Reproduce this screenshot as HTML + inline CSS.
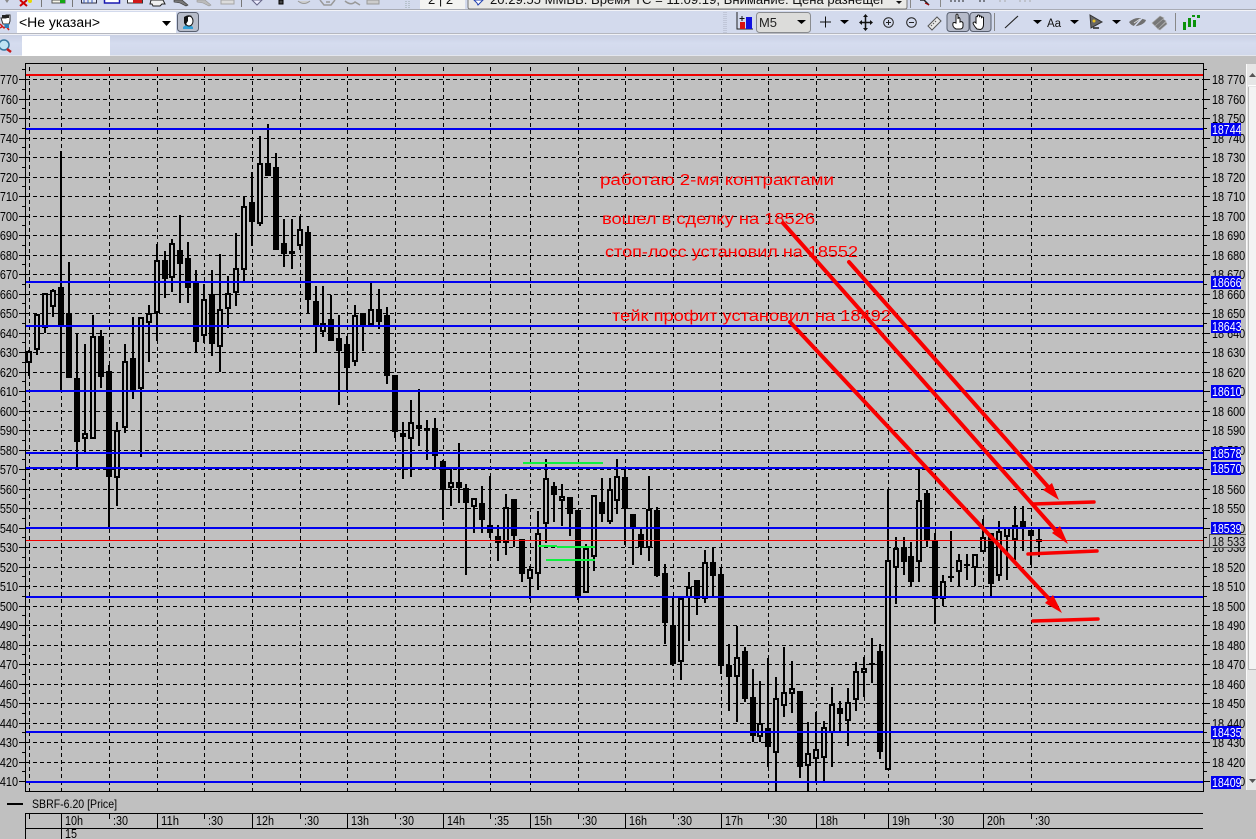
<!DOCTYPE html>
<html lang="ru"><head><meta charset="utf-8"><title>SBRF-6.20</title>
<style>html,body{margin:0;padding:0;background:#c0c0c0;width:1256px;height:839px;overflow:hidden}svg{display:block}text{font-family:"Liberation Sans","DejaVu Sans",sans-serif}</style></head>
<body>
<svg xmlns="http://www.w3.org/2000/svg" width="1256" height="839" viewBox="0 0 1256 839">
<defs>
<linearGradient id="r3" x1="0" y1="0" x2="0" y2="1"><stop offset="0" stop-color="#c9d0e4"/><stop offset=".4" stop-color="#d5dcef"/><stop offset="1" stop-color="#d0d7ea"/></linearGradient>
<path id="maj" d="M0 79.5h6M0 99.5h6M0 118.5h6M0 138.5h6M0 157.5h6M0 177.5h6M0 196.5h6M0 216.5h6M0 235.5h6M0 255.5h6M0 274.5h6M0 294.5h6M0 313.5h6M0 333.5h6M0 352.5h6M0 372.5h6M0 391.5h6M0 411.5h6M0 430.5h6M0 450.5h6M0 469.5h6M0 489.5h6M0 508.5h6M0 528.5h6M0 547.5h6M0 567.5h6M0 586.5h6M0 606.5h6M0 625.5h6M0 645.5h6M0 664.5h6M0 684.5h6M0 703.5h6M0 723.5h6M0 742.5h6M0 762.5h6M0 781.5h6" stroke="#000" fill="none"/>
<path id="min" d="M0 69.5h3M0 89.5h3M0 108.5h3M0 128.5h3M0 147.5h3M0 167.5h3M0 186.5h3M0 206.5h3M0 225.5h3M0 245.5h3M0 264.5h3M0 284.5h3M0 303.5h3M0 323.5h3M0 342.5h3M0 362.5h3M0 381.5h3M0 401.5h3M0 420.5h3M0 440.5h3M0 459.5h3M0 479.5h3M0 498.5h3M0 518.5h3M0 537.5h3M0 557.5h3M0 576.5h3M0 596.5h3M0 615.5h3M0 635.5h3M0 654.5h3M0 674.5h3M0 693.5h3M0 713.5h3M0 732.5h3M0 752.5h3M0 771.5h3" stroke="#000" fill="none"/>
</defs>

<!-- toolbars -->
<rect width="1256" height="56" fill="#d3daed"/>
<rect y="9" width="1256" height="1" fill="#a9acb5"/><rect y="10" width="1256" height="1" fill="#f2f3f8"/>
<rect y="33" width="1256" height="1" fill="#b5b7bf"/><rect y="34" width="1256" height="1" fill="#f0f1f6"/>
<rect y="35" width="1256" height="21" fill="url(#r3)"/>
<rect y="55" width="1256" height="1" fill="#e4e6ee"/>

<!-- row 1 cut icons -->
<g>
<path d="M5 0h4l-2 3z" fill="#888"/>
<path d="M20 0l7 6M27 0l-7 6" stroke="#d00000" stroke-width="2"/><circle cx="30" cy="1" r="2" fill="#e8d800"/>
<rect x="41" y="0" width="1" height="7" fill="#777"/>
<rect x="52" y="0" width="13" height="3" fill="#f4f4e8" stroke="#555"/><path d="M60 0h5v3h-5z" fill="#14a814"/>
<rect x="72" y="0" width="1" height="7" fill="#777"/>
<rect x="81.500" y="-2" width="15" height="5" fill="#e8ecf8" stroke="#334"/><path d="M84 0v3M88 0v3M92 0v3" stroke="#3458b8"/>
<rect x="104.500" y="-2" width="15" height="5" fill="#fff" stroke="#1818b0" stroke-width="1.500"/>
<rect x="127.500" y="-2" width="15" height="5" fill="#fff" stroke="#333"/><rect x="133" y="0" width="9" height="3" fill="#d01818"/>
<path d="M151 0h12l2 4h-3l-2 2h-7l-1-2h-2z" fill="#f0f0f0" stroke="#222"/>
<path d="M174 0h8l6 5-2 1-6-3-6-1z" fill="#777" stroke="#333" stroke-width=".6"/>
<path d="M197 0h8l6 5-2 1-6-3-6-1z" fill="#bbb" stroke="#999" stroke-width=".6"/>
<path d="M221 0h13v4h-13z" fill="#dcdcdc" stroke="#a4a4a4"/>
<rect x="241" y="0" width="1" height="7" fill="#777"/>
<path d="M252 0h10l-5 5z" fill="#eef" stroke="#668"/>
<rect x="279" y="0" width="4" height="4" fill="#444" stroke="#000"/>
<path d="M298 1q6 5 12 0" fill="#cfcfcf" stroke="#999"/>
<path d="M320 0l4 5h7l4-5M326 2h4" fill="none" stroke="#999" stroke-width="1.500"/>
<path d="M345 1q6 5 10 1l5 3" fill="none" stroke="#999" stroke-width="1.500"/>
<path d="M367 0h12v4h-12z" fill="#ccc" stroke="#999"/>
<path d="M406 1v8M409 1v8" stroke="#9aa" stroke-dasharray="1 1"/>
<rect x="420" y="0" width="45" height="9" fill="#f3f3f1"/>
<text x="428" y="4" font-size="13" fill="#111">2 | 2</text>
<path d="M468 -2v9q0 2 2 2h435q2 0 2-2v-9" fill="#e9e9e6" stroke="#777"/>
<path d="M474 0h9l-3 3-2 2-1-2z" fill="#fff" stroke="#2040b0"/>
<text x="490" y="4" font-size="13" fill="#111" textLength="395" lengthAdjust="spacingAndGlyphs">20:29:55  ММВБ: Время ТС = 11:09:19, Внимание: Цена разнещег</text>
<path d="M896 1h6l-3 3z" fill="#111"/>
<rect x="910" y="0" width="1" height="8" fill="#888"/>
<path d="M920 0h4l2 2 3 3" fill="none" stroke="#222" stroke-width="1.500"/><path d="M925 3l4 2" stroke="#a00"/>
<rect x="940" y="0" width="1" height="7" fill="#888"/>
<path d="M951 0v2M955 0v2M959 0v2M963 0v2M980 0v2M984 0v2" stroke="#222"/><path d="M1000 0v2M1005 0v2M1020 0v2M1025 0v2M1030 0v2" stroke="#aaa"/>
</g>

<!-- row 2 left -->
<g>
<path d="M1 18h5v-3h4v6l-1 3h-6z" fill="#fff" stroke="#333"/><path d="M2 15h7v3H2z" fill="#222"/>
<path d="M0 24l4 4 2-2 3 4M0 28l3-2" stroke="#d01818" stroke-width="1.500" fill="none"/>
<path d="M4 24h5v4H5z" fill="#2d7fb8"/>
<rect x="17" y="12" width="159" height="21" fill="#fff"/>
<text x="19" y="27" font-size="13.500" fill="#000" textLength="81" lengthAdjust="spacingAndGlyphs">&lt;Не указан&gt;</text>
<path d="M162 21h9l-4.500 5z" fill="#000"/>
<rect x="177.500" y="12.500" width="21" height="19" rx="3" fill="#b8bdca" stroke="#596070"/>
<path d="M183 27q5-4 10 0v2h-10z" fill="#30a0d8"/>
<ellipse cx="189" cy="21" rx="4" ry="5" fill="#fff" stroke="#111"/><path d="M184 23v-6q4-3 8-1l-4 1v4l-2 3v2z" fill="#111"/>
<!-- row 3 -->
<rect x="22" y="36" width="88" height="20" fill="#fff"/>
<circle cx="4" cy="45" r="5" fill="#bfe4f4" stroke="#3878a0" stroke-width="1.500"/>
<path d="M7 49l4 3" stroke="#c81818" stroke-width="2.500"/>
</g>

<!-- row 2 right -->
<g>
<path d="M724 12v21M726 12v21" stroke="#aeb3c2" stroke-dasharray="1 1"/>
<path d="M737 12v17h16" fill="none" stroke="#222"/>
<rect x="740" y="22" width="5" height="7" fill="#d81010"/><rect x="746" y="17" width="6" height="12" fill="#1010e0"/>
<path d="M742 16v5M739.500 18.500h5" stroke="#111"/>
<rect x="756.500" y="12.500" width="54" height="20" rx="3" fill="#dcdcda" stroke="#8a8c90"/>
<text x="759" y="27" font-size="13" fill="#222" textLength="18" lengthAdjust="spacingAndGlyphs">M5</text>
<path d="M797 20h9l-4.500 4z" fill="#000"/>
<path d="M820 22h11M825.500 16.500v11" stroke="#111"/>
<path d="M840 20h9l-4.500 4zM1033 20h9l-4.500 4zM1070 20h9l-4.500 4zM1112 20h9l-4.500 4z" fill="#000"/>
<path d="M860 22.500h12M865.500 16v13" stroke="#111" stroke-width="1.500"/><path d="M865.500 14l-2.500 3h5zM865.500 31l-2.500-3h5zM859 22.500l3-2.500v5zM873 22.500l-3-2.500v5z" fill="#111"/>
<circle cx="888.500" cy="22.500" r="4.800" fill="none" stroke="#222"/><path d="M886 22.500h5M888.500 20v5" stroke="#222"/>
<circle cx="911.500" cy="22.500" r="4.800" fill="none" stroke="#222"/><path d="M909 22.500h5" stroke="#222"/>
<path d="M928 26l9-9 4 4-9 9z" fill="#e8e8e8" stroke="#555"/><path d="M931 25l1 1M933 23l1 1M935 21l1 1" stroke="#555"/>
<rect x="947" y="12.500" width="22" height="19" rx="3" fill="#b6bbca" stroke="#596070"/>
<rect x="970" y="12.500" width="21" height="19" rx="3" fill="#b6bbca" stroke="#596070"/>
<path d="M956 29q-4-2-3-6 1-1 3 0v-8q1-2 2 0v4q1-3 2 0v3q2-1 3 1v3q0 3-3 3z" fill="#fff" stroke="#111"/>
<path d="M977 29q-3-3-4-6 1-2 3 0v-6q1-1 1.500 0v-1.500q1-1 2 0v1q1-1 2 0v1q1-1 2 0v7q0 4-3 5z" fill="#fff" stroke="#111"/>
<rect x="994" y="13" width="1" height="18" fill="#888"/>
<path d="M1005 28l13-12" stroke="#222" stroke-width="1.100"/>
<text x="1047" y="27" font-size="11.500" fill="#111">Aa</text>
<path d="M1090 15l1 13 11-6z" fill="#666" stroke="#333"/><path d="M1093 28h6" stroke="#222" stroke-width="1.500"/><circle cx="1094" cy="21" r="1.500" fill="#e8c020"/>
<path d="M1129 22q7-6 14-3l3 1q-1 4-9 6-5 1-8-4z" fill="#707070"/><path d="M1132 29l12-13" stroke="#d3daed" stroke-width="1.500"/><path d="M1134 23l6-4" stroke="#ddd"/>
<path d="M1152 23l8-7 4 2-9 8zM1155 26l8-7 3 2-8 8zM1158 29l8-7 1 2-7 6z" fill="#777" stroke="#aaa" stroke-width=".6"/>
<rect x="1175" y="13" width="1" height="18" fill="#888"/>
<path d="M1183 22h3v8h-3zM1188 18h3v9h-3zM1193 20h3v7h-3zM1197 15h3v3h-3zM1192 15h3v2h-3z" fill="#0b930b"/>
</g>

<!-- chart -->
<rect y="56" width="1256" height="783" fill="#c0c0c0"/>
<g shape-rendering="crispEdges">
<path d="M26 79.500H1203M26 99.500H1203M26 118.500H1203M26 138.500H1203M26 157.500H1203M26 177.500H1203M26 196.500H1203M26 216.500H1203M26 235.500H1203M26 255.500H1203M26 274.500H1203M26 294.500H1203M26 313.500H1203M26 333.500H1203M26 352.500H1203M26 372.500H1203M26 391.500H1203M26 411.500H1203M26 430.500H1203M26 450.500H1203M26 469.500H1203M26 489.500H1203M26 508.500H1203M26 528.500H1203M26 547.500H1203M26 567.500H1203M26 586.500H1203M26 606.500H1203M26 625.500H1203M26 645.500H1203M26 664.500H1203M26 684.500H1203M26 703.500H1203M26 723.500H1203M26 742.500H1203M26 762.500H1203M26 781.500H1203" stroke="#000" stroke-dasharray="4 3" fill="none"/>
<path d="M29.500 67V791M61.500 67V791M109.500 67V791M157.500 67V791M204.500 67V791M252.500 67V791M300.500 67V791M347.500 67V791M395.500 67V791M443.500 67V791M490.500 67V791M530.500 67V791M578.500 67V791M625.500 67V791M673.500 67V791M721.500 67V791M768.500 67V791M816.500 67V791M864.500 67V791M888.500 67V791M935.500 67V791M983.500 67V791M1031.500 67V791" stroke="#000" stroke-dasharray="4 3" fill="none"/>

<!-- wicks -->
<path fill="none" stroke="#000" stroke-width="2" d="M29 350V376M37 314V355M45 293V333M53 289V317M61 151V390M69 262V378M77 333V467M85 344V452M93 315V439M101 330V388M109 365V527M117 422V506M125 344V433M133 317V399M141 317V457M149 305V362M157 244V341M165 251V298M172 239V292M180 215V303M188 242V303M196 270V352M204 284V343M212 270V356M220 254V372M228 276V328M236 233V306M244 197V282M252 172V246M260 136V226M268 124V176M276 153V250M284 219V267M292 219V269M300 216V250M308 226V313M316 286V352M323 286V337M331 295V341M339 315V405M347 336V390M355 305V366M363 313V351M371 283V325M379 289V329M387 307V384M395 375V438M403 422V479M411 400V477M419 389V446M427 420V460M435 418V467M443 460V520M451 469V506M459 443V503M466 484V575M474 498V533M482 486V533M490 476V538M498 525V561M506 494V555M514 499V547M522 539V582M530 566V599M538 511V590M546 459V543M554 482V522M562 484V526M570 497V536M578 510V600M586 544V593M594 495V571M602 478V522M610 478V524M617 459V514M625 470V545M633 514V565M641 528V555M649 476V561M657 507V577M665 564V644M673 598V666M681 598V680M689 572V641M697 580V615M705 550V603M713 547V597M721 568V674M729 644V711M737 626V722M745 647V702M753 669V742M760 681V742M768 658V767M776 677V792M784 647V717M792 661V713M800 691V778M808 722V792M816 712V782M824 721V782M832 687V767M840 701V731M848 688V746M856 662V711M864 657V697M872 638V683M880 644V759M888 489V770M896 537V604M904 537V575M911 542V586M919 469V582M927 490V547M935 533V624M943 575V606M951 531V582M959 554V586M967 554V580M975 554V586M983 519V552M991 533V596M999 521V581M1007 527V580M1015 506V560M1023 506V551M1031 530V565M1039 529V557"/>
<!-- bodies -->
<path fill="none" stroke="#000" stroke-width="6" d="M29 351V363M37 314V350M45 293V328M53 290V307M61 287V327M69 313V378M77 378V442M85 433V439M93 336V439M101 336V377M109 371V477M117 430V478M125 361V428M133 358V390M141 317V389M149 313V323M157 260V313M165 260V279M172 243V278M180 250V264M188 258V288M196 282V342M204 299V336M212 294V344M220 309V347M228 293V309M236 268V293M244 206V270M252 202V222M260 163V224M268 163V176M276 167V250M284 243V254M292 251V254M300 229V246M308 232V300M316 301V326M323 323V332M331 319V341M339 338V351M347 344V368M355 315V362M363 313V325M371 309V325M379 309V322M387 315V376M395 375V432M403 433V437M411 422V439M419 425V429M427 428V431M435 428V456M443 461V490M451 482V488M459 482V488M466 488V503M474 498V507M482 503V520M490 525V533M498 536V543M506 507V543M514 499V536M522 539V574M530 569V579M538 533V574M546 478V524M554 486V495M562 496V501M570 497V514M578 510V597M586 548V593M594 495V557M602 502V514M610 489V522M617 476V501M625 477V509M633 514V527M641 534V547M649 509V548M657 510V576M665 573V623M673 625V664M681 598V662M689 587V598M697 580V599M705 562V599M713 562V576M721 574V666M729 665V677M737 657V677M745 651V699M753 697V736M760 723V737M768 728V747M776 698V753M784 692V706M792 688V694M800 691V767M808 753V766M816 749V759M824 727V758M832 704V733M840 708V714M848 702V721M856 671V700M864 668V673M872 663V665M880 651V752M888 560V770M896 548V568M904 547V562M911 556V582M919 500V562M927 493V541M935 540V599M943 581V599M951 576V578M959 560V572M967 564V566M975 554V568M983 537V552M991 533V584M999 531V576M1007 527V537M1015 525V540M1023 521V529M1031 530V536M1039 539V542"/>
<!-- hollow interiors -->
<path fill="none" stroke="#c0c0c0" stroke-width="2" d="M29 353V361M37 316V348M45 295V326M53 292V305M85 435V437M93 338V437M117 432V476M125 363V426M141 319V387M149 315V321M157 262V311M172 245V276M204 301V334M220 311V345M228 295V307M236 270V291M244 208V268M260 165V222M300 231V244M323 325V330M355 317V360M371 311V323M411 424V437M451 484V486M474 500V505M506 509V541M530 571V577M538 535V572M546 480V522M562 498V499M586 550V591M594 497V555M610 491V520M617 478V499M649 511V546M681 600V660M689 589V596M705 564V597M737 659V675M760 725V735M776 700V751M784 694V704M792 690V692M808 755V764M816 751V757M824 729V756M832 706V731M848 704V719M856 673V698M864 670V671M888 562V768M896 550V566M919 502V560M943 583V597M959 562V570M975 556V566M983 539V550M999 533V574M1007 529V535M1015 527V538"/>

<!-- levels -->
<rect x="26" y="74" width="1177" height="2" fill="#f00000"/>
<g fill="#0000f0">
<rect x="26" y="128" width="1177" height="2"/><rect x="26" y="281" width="1177" height="2"/><rect x="26" y="325" width="1177" height="2"/><rect x="26" y="390" width="1177" height="2"/><rect x="26" y="452" width="1177" height="2"/><rect x="26" y="467" width="1177" height="2"/><rect x="26" y="527" width="1177" height="2"/><rect x="26" y="596" width="1177" height="2"/><rect x="26" y="731" width="1177" height="2"/><rect x="26" y="781" width="1177" height="2"/>
</g>
<rect x="26" y="540" width="1177" height="1" fill="#f00000"/>

<!-- frame -->
<rect x="25.500" y="63.500" width="1178" height="728" fill="none" stroke="#000"/>
<use href="#maj" x="19"/><use href="#min" x="22"/>
<use href="#maj" x="1204"/><use href="#min" x="1204"/>
</g>

<!-- green -->
<g fill="#10f040" shape-rendering="crispEdges">
<rect x="523" y="462" width="80" height="2"/><rect x="538" y="545" width="19" height="2"/><rect x="557" y="546" width="38" height="2"/><rect x="546" y="559" width="49" height="2"/>
</g>

<!-- left labels -->
<g transform="translate(18 0) scale(.87 1)" text-anchor="end" font-size="12.500" fill="#000">
<text y="84">18 770</text><text y="104">18 760</text><text y="123">18 750</text><text y="143">18 740</text><text y="162">18 730</text><text y="182">18 720</text><text y="201">18 710</text><text y="221">18 700</text><text y="240">18 690</text><text y="260">18 680</text><text y="279">18 670</text><text y="299">18 660</text><text y="318">18 650</text><text y="338">18 640</text><text y="357">18 630</text><text y="377">18 620</text><text y="396">18 610</text><text y="416">18 600</text><text y="435">18 590</text><text y="455">18 580</text><text y="474">18 570</text><text y="494">18 560</text><text y="513">18 550</text><text y="533">18 540</text><text y="552">18 530</text><text y="572">18 520</text><text y="591">18 510</text><text y="611">18 500</text><text y="630">18 490</text><text y="650">18 480</text><text y="669">18 470</text><text y="689">18 460</text><text y="708">18 450</text><text y="728">18 440</text><text y="747">18 430</text><text y="767">18 420</text><text y="786">18 410</text>
</g>
<!-- right labels -->
<g transform="translate(1212 0) scale(.87 1)" font-size="12.500" fill="#000">
<text y="84">18 770</text><text y="104">18 760</text><text y="123">18 750</text><text y="143">18 740</text><text y="162">18 730</text><text y="182">18 720</text><text y="201">18 710</text><text y="221">18 700</text><text y="240">18 690</text><text y="260">18 680</text><text y="279">18 670</text><text y="299">18 660</text><text y="318">18 650</text><text y="338">18 640</text><text y="357">18 630</text><text y="377">18 620</text><text y="396">18 610</text><text y="416">18 600</text><text y="435">18 590</text><text y="455">18 580</text><text y="474">18 570</text><text y="494">18 560</text><text y="513">18 550</text><text y="533">18 540</text><text y="552">18 530</text><text y="572">18 520</text><text y="591">18 510</text><text y="611">18 500</text><text y="630">18 490</text><text y="650">18 480</text><text y="669">18 470</text><text y="689">18 460</text><text y="708">18 450</text><text y="728">18 440</text><text y="747">18 430</text><text y="767">18 420</text><text y="786">18 410</text>
</g>
<!-- blue value tags -->
<g fill="#0000f0" shape-rendering="crispEdges">
<rect x="1211" y="123" width="30" height="13"/><rect x="1211" y="276" width="30" height="13"/><rect x="1211" y="320" width="30" height="13"/><rect x="1211" y="385" width="30" height="13"/><rect x="1211" y="447" width="30" height="13"/><rect x="1211" y="462" width="30" height="13"/><rect x="1211" y="522" width="30" height="13"/><rect x="1211" y="726" width="30" height="13"/><rect x="1211" y="776" width="30" height="13"/>
</g>
<g transform="translate(1212 0) scale(.85 1)" font-size="12.500" fill="#fff">
<text y="134">18744</text><text y="287">18666</text><text y="331">18643</text><text y="396">18610</text><text y="458">18578</text><text y="473">18570</text><text y="533">18539</text><text y="737">18435</text><text y="787">18409</text>
</g>
<rect x="1209.500" y="534.500" width="37" height="13" fill="#c0c0c0" stroke="#555" shape-rendering="crispEdges"/>
<g transform="translate(1212 0) scale(.87 1)" font-size="12.500" fill="#111"><text y="546">18 533</text></g>

<!-- annotation text -->
<g font-size="16" fill="#ff0000">
<text x="600" y="185" textLength="234" lengthAdjust="spacingAndGlyphs">работаю 2-мя контрактами</text>
<text x="602" y="224" textLength="213" lengthAdjust="spacingAndGlyphs">вошел в сделку на 18526</text>
<text x="605" y="257" textLength="253" lengthAdjust="spacingAndGlyphs">стоп-лосс установил на 18552</text>
<text x="612" y="321" textLength="279" lengthAdjust="spacingAndGlyphs">тейк профит установил на 18492</text>
</g>

<!-- arrows -->
<g stroke="#f80000" stroke-width="4" fill="none" stroke-linecap="round">
<path d="M849 262L1050 489"/><path d="M783 223L1058 533"/><path d="M790 322L1052 602"/>
<path d="M1033 504L1094 502M1028 554L1097 551M1033 621L1098 619" stroke-width="3.500"/>
</g>
<g fill="#f80000">
<path d="M1059 500L1052 483L1043 490z"/><path d="M1068 544L1060 526L1052 533z"/><path d="M1062 613L1053 595L1045 603z"/>
</g>

<!-- bottom area -->
<g shape-rendering="crispEdges">
<rect x="7" y="803" width="16" height="2" fill="#000"/>
<path d="M25.500 813.500H1203M25.500 828.500H1203M25.500 813V839M61.500 813V839M157.500 813V828M252.500 813V828M347.500 813V828M443.500 813V828M530.500 813V828M625.500 813V828M721.500 813V828M816.500 813V828M888.500 813V828M983.500 813V828M29.500 814V819M109.500 814V819M204.500 814V819M300.500 814V819M395.500 814V819M490.500 814V819M578.500 814V819M673.500 814V819M768.500 814V819M864.500 814V819M935.500 814V819M1031.500 814V819" stroke="#000" fill="none"/>
</g>
<text x="32" y="808" font-size="12" fill="#000" textLength="85" lengthAdjust="spacingAndGlyphs">SBRF-6.20 [Price]</text>
<g font-size="12.500" fill="#000">
<text x="65" y="825" textLength="18" lengthAdjust="spacingAndGlyphs">10h</text><text x="113" y="825" textLength="15" lengthAdjust="spacingAndGlyphs">:30</text>
<text x="161" y="825" textLength="18" lengthAdjust="spacingAndGlyphs">11h</text><text x="208" y="825" textLength="15" lengthAdjust="spacingAndGlyphs">:30</text>
<text x="256" y="825" textLength="18" lengthAdjust="spacingAndGlyphs">12h</text><text x="304" y="825" textLength="15" lengthAdjust="spacingAndGlyphs">:30</text>
<text x="351" y="825" textLength="18" lengthAdjust="spacingAndGlyphs">13h</text><text x="399" y="825" textLength="15" lengthAdjust="spacingAndGlyphs">:30</text>
<text x="447" y="825" textLength="18" lengthAdjust="spacingAndGlyphs">14h</text><text x="494" y="825" textLength="15" lengthAdjust="spacingAndGlyphs">:35</text>
<text x="534" y="825" textLength="18" lengthAdjust="spacingAndGlyphs">15h</text><text x="582" y="825" textLength="15" lengthAdjust="spacingAndGlyphs">:30</text>
<text x="629" y="825" textLength="18" lengthAdjust="spacingAndGlyphs">16h</text><text x="677" y="825" textLength="15" lengthAdjust="spacingAndGlyphs">:30</text>
<text x="725" y="825" textLength="18" lengthAdjust="spacingAndGlyphs">17h</text><text x="772" y="825" textLength="15" lengthAdjust="spacingAndGlyphs">:30</text>
<text x="820" y="825" textLength="18" lengthAdjust="spacingAndGlyphs">18h</text>
<text x="892" y="825" textLength="18" lengthAdjust="spacingAndGlyphs">19h</text><text x="939" y="825" textLength="15" lengthAdjust="spacingAndGlyphs">:30</text>
<text x="987" y="825" textLength="18" lengthAdjust="spacingAndGlyphs">20h</text><text x="1035" y="825" textLength="15" lengthAdjust="spacingAndGlyphs">:30</text>
<text x="65" y="838" textLength="12" lengthAdjust="spacingAndGlyphs">15</text>
</g>

<!-- scrollbar -->
<g shape-rendering="crispEdges">
<rect x="1246" y="64" width="10" height="726" fill="#e6e6e6"/>
<rect x="1246" y="64" width="1" height="726" fill="#fafafa"/>
<rect x="1248" y="87" width="8" height="583" fill="#f3f3f3"/>
<rect x="1248" y="87" width="1" height="583" fill="#b8b8b8"/>
<rect x="1248" y="669" width="8" height="1" fill="#b8b8b8"/>
<rect x="1248" y="85" width="8" height="1" fill="#fff"/>
</g>
<path d="M1249 77l3.500-4 3.500 4z" fill="#555"/>
<path d="M1249 779l3.500 4 3.500-4z" fill="#555"/>
</svg>
</body></html>
